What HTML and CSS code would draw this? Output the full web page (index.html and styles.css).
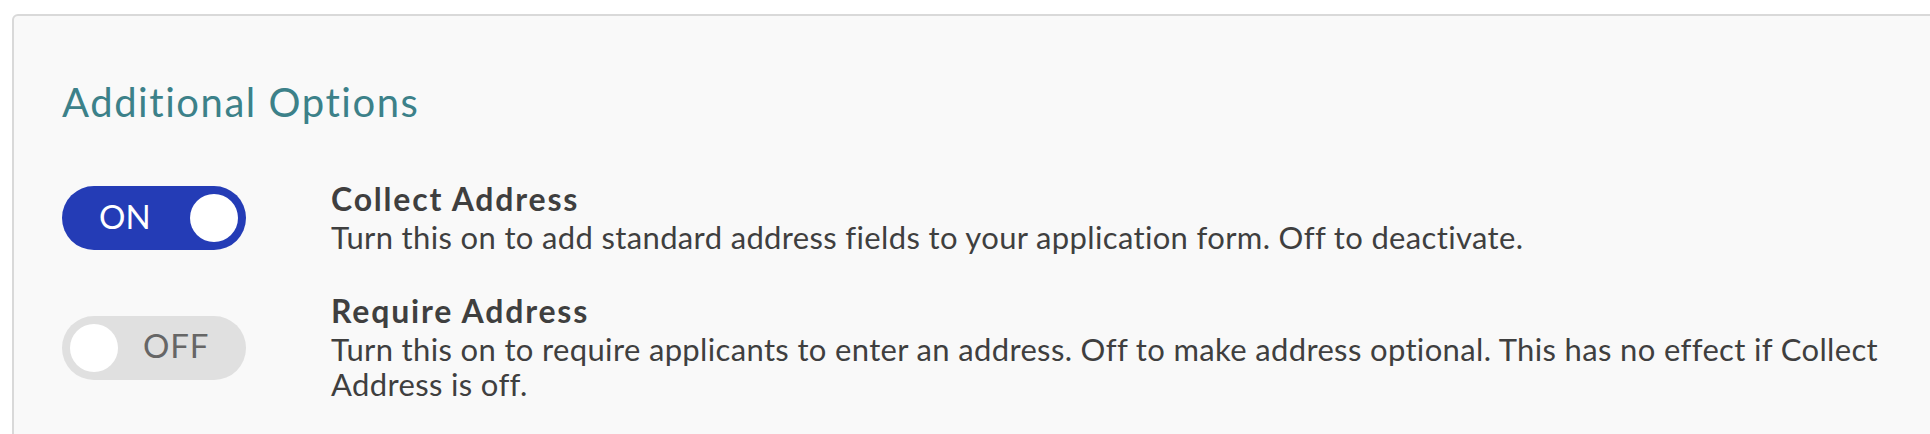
FILE: index.html
```html
<!DOCTYPE html>
<html lang="en">
<head>
<meta charset="utf-8">
<title>Additional Options</title>
<link rel="stylesheet" href="styles.css">
</head>
<body>
<section class="card">
  <h2 class="card-title">Additional Options</h2>
  <div class="options">
    <div class="option">
      <div class="switch-col">
        <div class="toggle toggle-on" role="switch" aria-checked="true">
          <span class="toggle-label">ON</span>
          <span class="knob"></span>
        </div>
      </div>
      <div class="option-text">
        <div class="option-name">Collect Address</div>
        <div class="option-desc">Turn this on to add standard address fields to your application form. Off to deactivate.</div>
      </div>
    </div>
    <div class="option">
      <div class="switch-col">
        <div class="toggle toggle-off" role="switch" aria-checked="false">
          <span class="knob"></span>
          <span class="toggle-label">OFF</span>
        </div>
      </div>
      <div class="option-text">
        <div class="option-name">Require Address</div>
        <div class="option-desc">Turn this on to require applicants to enter an address. Off to make address optional. This has no effect if Collect Address is off.</div>
      </div>
    </div>
  </div>
</section>
</body>
</html>
```
FILE: styles.css
```css
html, body {
  margin: 0;
  padding: 0;
  background: #ffffff;
  overflow: hidden;
}

body {
  font-family: Lato, "Open Sans", "Liberation Sans", sans-serif;
  color: #3f3f3f;
}

.card {
  margin: 14px -20px 0 12px;
  border: 2px solid #d9d9d9;
  border-radius: 6px;
  background: #f9f9f9;
  padding: 62px 48px 60px 48px;
  min-height: 400px;
}

.card-title {
  margin: 0;
  font-size: 40px;
  line-height: 48px;
  font-weight: 400;
  color: #3c8189;
  letter-spacing: 1.55px;
}

.options {
  margin-top: 55px;
  display: flex;
  flex-direction: column;
  gap: 38px;
}

.option {
  display: flex;
  align-items: center;
}

.switch-col {
  flex: none;
  width: 269px;
}

.toggle {
  box-sizing: border-box;
  width: 184px;
  height: 64px;
  border-radius: 32px;
  display: flex;
  align-items: center;
  padding: 0 8px;
}

.toggle-on {
  background: #243cb6;
  color: #ffffff;
  padding-left: 37px;
}

.toggle-on .knob {
  margin-left: auto;
}

.toggle-off {
  background: #e0e0e0;
  color: #666666;
}

.toggle-off .toggle-label {
  margin-left: 25px;
  letter-spacing: 0.8px;
}

.knob {
  flex: none;
  width: 48px;
  height: 48px;
  border-radius: 50%;
  background: #ffffff;
}

.toggle-label {
  font-size: 33px;
  line-height: 33px;
  padding-bottom: 4px;
}

.option-text {
  flex: 1;
  min-width: 0;
}

.option-name {
  font-size: 32px;
  line-height: 35px;
  font-weight: 700;
  letter-spacing: 1.8px;
  margin-bottom: 4px;
}

.option-desc {
  font-size: 31px;
  line-height: 35px;
  letter-spacing: 0.35px;
}
```
